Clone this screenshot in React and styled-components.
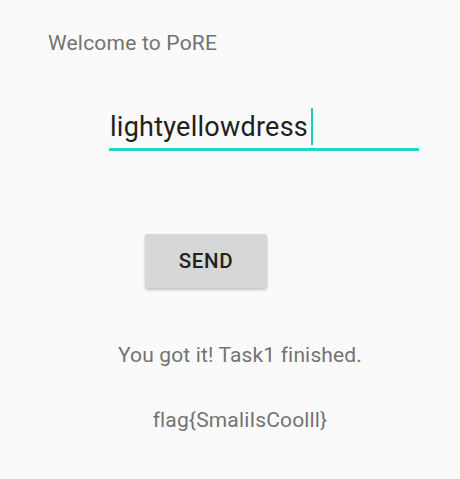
import styled, { createGlobalStyle } from 'styled-components'

const GlobalStyle = createGlobalStyle`
  body {
    margin: 0;
    background: #fafafa;
    font-family: Roboto, 'Liberation Sans', sans-serif;
  }
`

const Screen = styled.div`
  display: flex;
  flex-direction: column;
  height: 479px;
  padding-top: 31px;
  box-sizing: border-box;
  background: #fafafa;
`

const Welcome = styled.div`
  margin-left: 48px;
  font-size: 21px;
  line-height: 25px;
  letter-spacing: 0.2px;
  color: #737373;
`

const Field = styled.div`
  display: flex;
  align-items: flex-start;
  margin: 52px 0 0 109px;
  width: 310px;
  padding-bottom: 3px;
  border-bottom: 3px solid #1ed6c4;
`

const FieldText = styled.span`
  margin: 3px 0 0 1px;
  font-size: 27px;
  line-height: 32px;
  letter-spacing: 0.25px;
  color: #212121;
`

const Caret = styled.span`
  width: 2px;
  height: 37px;
  margin-left: 3px;
  background: #1ccfbd;
`

const SendButton = styled.button`
  margin: 83px 0 0 145px;
  width: 122px;
  height: 54px;
  border: none;
  border-radius: 3px;
  background: #d6d7d7;
  box-shadow: 0 2px 3px rgba(0, 0, 0, 0.22), 0 0 1px rgba(0, 0, 0, 0.12);
  font-family: inherit;
  font-size: 20.5px;
  font-weight: 500;
  letter-spacing: 0.6px;
  color: #222;
  padding: 0;
`

const Message = styled.div`
  margin-top: ${(p) => p.$gap}px;
  padding-left: 20px;
  text-align: center;
  font-size: 21px;
  line-height: 25px;
  letter-spacing: 0.15px;
  color: #737373;
`

export default function App() {
  return (
    <>
      <GlobalStyle />
      <Screen>
        <Welcome>Welcome to PoRE</Welcome>
        <Field>
          <FieldText>lightyellowdress</FieldText>
          <Caret />
        </Field>
        <SendButton>SEND</SendButton>
        <Message $gap={55}>You got it! Task1 finished.</Message>
        <Message $gap={40}>flag{'{'}SmaliIsCoolll{'}'}</Message>
      </Screen>
    </>
  )
}
